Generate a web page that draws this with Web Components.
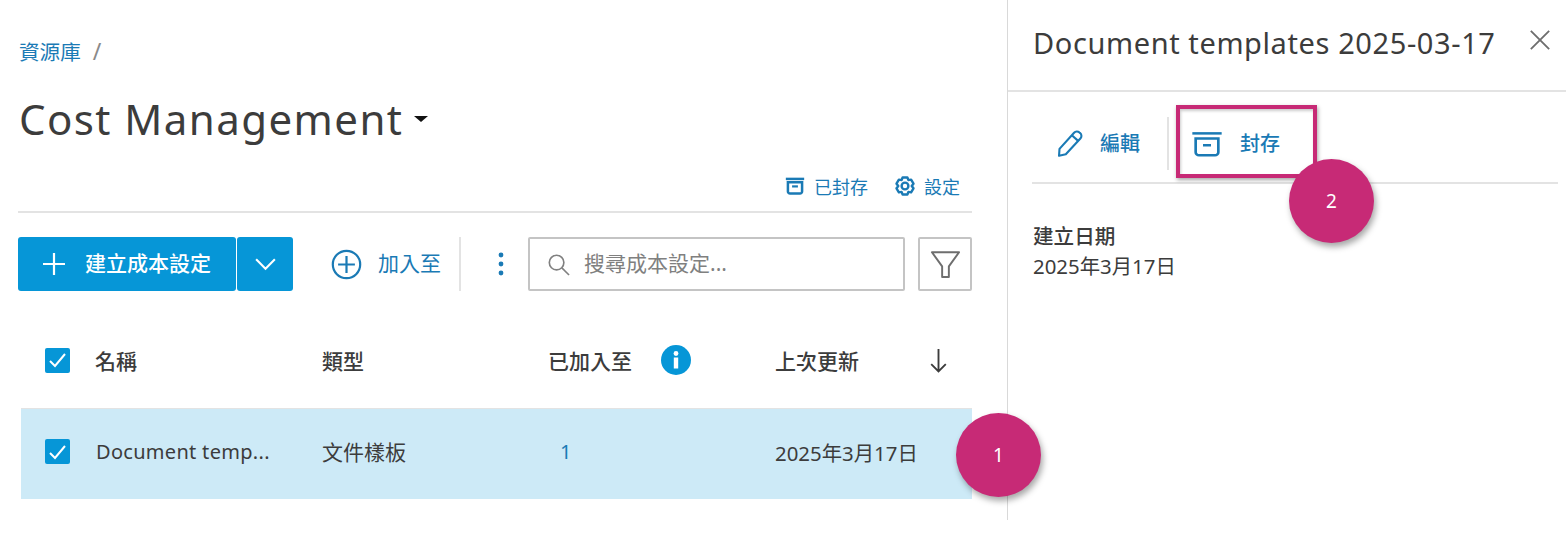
<!DOCTYPE html>
<html lang="zh-Hant">
<head>
<meta charset="utf-8">
<title>Cost Management</title>
<style>
  html, body { margin: 0; background: #fff; }
  body { font-family: "Noto Sans", "Noto Sans CJK TC", sans-serif; color: #3c3c3c; width: 1566px; height: 558px; overflow: hidden; position: relative; }
</style>
</head>
<body>
<app-shell>
  <library-view slot="main"></library-view>
  <detail-panel slot="side"></detail-panel>
</app-shell>
<note-marker n="1" style="left:956px;top:413px"></note-marker>
<note-frame style="left:1176px;top:105px"></note-frame>
<note-marker n="2" style="left:1289px;top:159px"></note-marker>

<script>
const BLUE = '#0696d7';
const LINK = '#1a7ab5';
const FONT = '"Noto Sans", "Noto Sans CJK TC", sans-serif';

const ICONS = {
  plus: '<path d="M12 1v22M1 12h22" fill="none" stroke="currentColor" stroke-width="2.2"/>',
  chevron: '<path d="M3 7l9 9 9-9" fill="none" stroke="currentColor" stroke-width="2"/>',
  addCircle: '<circle cx="12" cy="12" r="10.6" fill="none" stroke="currentColor" stroke-width="1.7"/><path d="M12 5.5v13M5.5 12h13" fill="none" stroke="currentColor" stroke-width="1.7"/>',
  archive: '<path d="M1 3.5h22" fill="none" stroke="currentColor" stroke-width="2"/><path d="M3.5 7.5v11a2.5 2.5 0 0 0 2.5 2.5h12a2.5 2.5 0 0 0 2.5-2.5v-11z" fill="none" stroke="currentColor" stroke-width="2"/><path d="M9 13h6" fill="none" stroke="currentColor" stroke-width="2"/>',
  archiveSmall: '<path d="M1 3.5h22" fill="none" stroke="currentColor" stroke-width="3"/><path d="M3.5 7.5v11a2.5 2.5 0 0 0 2.5 2.5h12a2.5 2.5 0 0 0 2.5-2.5v-11z" fill="none" stroke="currentColor" stroke-width="3"/><path d="M8.5 12.5h7" fill="none" stroke="currentColor" stroke-width="2.6"/>',
  gear: '<g transform="translate(0 1)"><path d="M9.6 2.5h4.8l1 2.6 2.7-.5 2.4 4.1-1.8 2.3 1.8 2.3-2.4 4.1-2.7-.5-1 2.6H9.6l-1-2.6-2.7.5-2.4-4.1 1.8-2.3-1.8-2.3 2.4-4.1 2.7.5z" fill="none" stroke="currentColor" stroke-width="2.4" stroke-linejoin="round"/><circle cx="12" cy="11" r="3.4" fill="none" stroke="currentColor" stroke-width="2.4"/></g>',
  search: '<circle cx="10" cy="10" r="7.6" fill="none" stroke="currentColor" stroke-width="1.7"/><path d="M15.5 15.5L23 23" fill="none" stroke="currentColor" stroke-width="1.7"/>',
  filter: '<path d="M1.5 2.5h21L14.6 13.5v8.2h-5.2v-8.2z" fill="none" stroke="currentColor" stroke-width="1.5" stroke-linejoin="round"/>',
  arrowDown: '<path d="M12 1v21.5M5 15.5l7 7 7-7" fill="none" stroke="currentColor" stroke-width="1.8"/>',
  close: '<path d="M2 2l20 20M22 2L2 22" fill="none" stroke="currentColor" stroke-width="2"/>',
  pencil: '<path d="M3 17L15.5 3.2a3.2 3.2 0 0 1 4.6-.2l.6.5a3.2 3.2 0 0 1 .2 4.6L8.4 21.6 2.6 23z" fill="none" stroke="currentColor" stroke-width="1.8" stroke-linejoin="round"/><path d="M13.6 5.4l5.6 5" fill="none" stroke="currentColor" stroke-width="1.8"/>'
};

class UiIcon extends HTMLElement {
  connectedCallback () {
    const size = this.getAttribute('size') || 24;
    const h = this.getAttribute('h') || size;
    this.attachShadow({ mode: 'open' }).innerHTML = `
      <style>:host { display: inline-flex; flex: none; line-height: 0; } svg { display: block; }</style>
      <svg width="${ size }" height="${ h }" viewBox="0 0 24 24" preserveAspectRatio="none">${ ICONS[this.getAttribute('name')] }</svg>`;
  }
}

class CheckBox extends HTMLElement {
  constructor () {
    super();
    this.attachShadow({ mode: 'open' }).innerHTML = `
      <style>
        :host { display: inline-flex; flex: none; width: 25px; height: 25px; background: ${ BLUE }; border-radius: 2px; align-items: center; justify-content: center; }
      </style>
      <svg width="19" height="16" viewBox="0 0 19 16"><path d="M2 9l5 5L17 2" fill="none" stroke="#fff" stroke-width="2"/></svg>`;
  }
}

class AppShell extends HTMLElement {
  constructor () {
    super();
    this.attachShadow({ mode: 'open' }).innerHTML = `
      <style>
        :host { display: grid; grid-template-columns: 1008px 558px; height: 520px; }
        .main { border-right: 1px solid #d9d9d9; }
      </style>
      <div class="main"><slot name="main"></slot></div>
      <div><slot name="side"></slot></div>`;
  }
}

class LibraryView extends HTMLElement {
  constructor () {
    super();
    this.attachShadow({ mode: 'open' }).innerHTML = `
      <style>
        :host { display: block; padding: 0 35px 0 18px; font-family: ${ FONT }; }
        .crumb { display: flex; align-items: center; height: 26px; padding-top: 38px; padding-left: 1px; font-size: 20.6px; color: ${ LINK }; gap: 12px; }
        .crumb i { font-style: normal; color: #8a8a8a; font-size: 23px; }
        .title { display: flex; align-items: center; height: 62px; margin-top: 23px; margin-bottom: 2px; font-size: 42px; letter-spacing: 1.43px; color: #3c3c3c; gap: 11px; padding-left: 1px; }
        .caret { width: 0; height: 0; border: 7px solid transparent; border-top: 6px solid #111; border-bottom: 0; margin-top: 2px; }
        .links { display: flex; justify-content: flex-end; align-items: center; gap: 26px; height: 50px; margin-top: 12px; padding-right: 12px; border-bottom: 2px solid #e3e3e3; font-size: 18px; color: ${ LINK }; }
        .links span { display: flex; align-items: center; gap: 9px; }
        .links .gear { margin: 0 -2px 0 -1px; }
      </style>
      <div class="crumb">資源庫 <i>/</i></div>
      <div class="title">Cost Management<span class="caret"></span></div>
      <div class="links">
        <span><ui-icon name="archiveSmall" size="20"></ui-icon>已封存</span>
        <span><ui-icon class="gear" name="gear" size="24"></ui-icon>設定</span>
      </div>
      <action-bar></action-bar>
      <cost-table></cost-table>`;
  }
}

class ActionBar extends HTMLElement {
  constructor () {
    super();
    this.attachShadow({ mode: 'open' }).innerHTML = `
      <style>
        :host { display: flex; align-items: stretch; height: 54px; margin-top: 24px; font-family: ${ FONT }; }
        .btn { background: ${ BLUE }; color: #fff; display: flex; align-items: center; font-size: 21px; font-weight: 500; }
        .create { width: 218px; border-radius: 3px; box-sizing: border-box; padding-left: 24px; gap: 19px; }
        .create span, .add span, .search span { position: relative; top: -2px; }
        .more { width: 56px; margin-left: 1px; border-radius: 3px; justify-content: center; }
        .add { display: flex; align-items: center; gap: 16px; margin-left: 38px; font-size: 21px; color: ${ LINK }; width: 130px; box-sizing: border-box; border-right: 2px solid #e3e3e3; }
        .dots { width: 67px; box-sizing: border-box; padding-left: 12px; display: flex; align-items: center; justify-content: center; }
        .dots svg { display: block; }
        .search { width: 377px; box-sizing: border-box; border: 2px solid #c4c4c4; border-radius: 2px; display: flex; align-items: center; padding-left: 17px; gap: 14px; color: #808080; font-size: 21px; }
        .filter { width: 54px; margin-left: 13px; box-sizing: border-box; border: 2px solid #c4c4c4; border-radius: 2px; display: flex; align-items: center; justify-content: center; color: #6e6e6e; }
      </style>
      <div class="btn create"><ui-icon name="plus" size="24"></ui-icon><span>建立成本設定</span></div>
      <div class="btn more"><ui-icon name="chevron" size="25"></ui-icon></div>
      <div class="add"><ui-icon name="addCircle" size="31"></ui-icon><span>加入至</span></div>
      <div class="dots"><svg width="6" height="24" viewBox="0 0 6 24" fill="${ LINK }"><circle cx="3" cy="3" r="2.4"/><circle cx="3" cy="12" r="2.4"/><circle cx="3" cy="21" r="2.4"/></svg></div>
      <div class="search"><ui-icon name="search" size="23"></ui-icon><span>搜尋成本設定...</span></div>
      <div class="filter"><ui-icon name="filter" size="31"></ui-icon></div>`;
  }
}

class CostTable extends HTMLElement {
  constructor () {
    super();
    this.attachShadow({ mode: 'open' }).innerHTML = `
      <style>
        :host { display: block; font-family: ${ FONT }; font-size: 21px; color: #3c3c3c; }
        .row { display: grid; align-items: center; box-sizing: border-box; }
        .head { height: 117px; padding-top: 21px; font-weight: 500; grid-template-columns: 27px 50px 227px 227px 226px 1fr; }
        .body { height: 91px; padding-bottom: 5px; background: #cdeaf7; margin-left: 3px; grid-template-columns: 24px 51px 226px 227px 226px 1fr; border-top: 1px solid #e3e3e3; }
        .with { display: flex; align-items: center; gap: 28px; margin-left: -1px; }
        .info { width: 30px; height: 30px; margin-left: 1px; }
        .sort { display: flex; align-items: center; justify-content: space-between; padding-right: 21px; }
        .count { color: ${ LINK }; padding-left: 11px; font-size: 20px; }
        .name { font-size: 20px; letter-spacing: .3px; }
        .type { position: relative; top: -1px; }
        .date { font-size: 20.4px; }
      </style>
      <div class="row head">
        <span></span><check-box></check-box>
        <span>名稱</span>
        <span>類型</span>
        <span class="with">已加入至<svg class="info" viewBox="0 0 30 30"><circle cx="15" cy="15" r="15" fill="${ BLUE }"/><circle cx="15" cy="8.5" r="2.4" fill="#fff"/><rect x="12.8" y="12.5" width="4.4" height="11" fill="#fff"/></svg></span>
        <span class="sort">上次更新<ui-icon name="arrowDown" size="25"></ui-icon></span>
      </div>
      <div class="row body">
        <span></span><check-box></check-box>
        <span class="name">Document temp...</span>
        <span class="type">文件樣板</span>
        <span class="count">1</span>
        <span class="date">2025年3月17日</span>
      </div>`;
  }
}

class DetailPanel extends HTMLElement {
  constructor () {
    super();
    this.attachShadow({ mode: 'open' }).innerHTML = `
      <style>
        :host { display: block; font-family: ${ FONT }; color: #3c3c3c; }
        .top { display: flex; justify-content: space-between; height: 92px; box-sizing: border-box; padding: 22px 15px 0 25px; border-bottom: 2px solid #e3e3e3; }
        .top h2 { margin: 0; font-size: 29px; font-weight: 400; letter-spacing: .6px; line-height: 42px; }
        .top ui-icon { color: #6e6e6e; margin-top: 7px; }
        .tools { display: flex; align-items: center; height: 92px; padding-top: 12px; margin: 0 8px 0 24px; border-bottom: 2px solid #e3e3e3; box-sizing: border-box; color: ${ LINK }; font-size: 20px; font-weight: 500; }
        .tool { display: flex; align-items: center; }
        .tool span { position: relative; top: -1px; }
        .edit { padding-left: 24px; gap: 16px; width: 137px; height: 53px; border-right: 2px solid #e3e3e3; box-sizing: border-box; }
        .arch { padding-left: 22px; gap: 17px; }
        .arch ui-icon { margin-top: 2px; }
        .meta { padding: 37px 0 0 25px; font-size: 20.4px; line-height: 30px; }
        .meta b { display: block; font-weight: 500; font-size: 20.6px; }
      </style>
      <div class="top">
        <h2>Document templates 2025-03-17</h2>
        <ui-icon name="close" size="22"></ui-icon>
      </div>
      <div class="tools">
        <div class="tool edit"><ui-icon name="pencil" size="28"></ui-icon><span>編輯</span></div>
        <div class="tool arch"><ui-icon name="archive" size="32" h="30"></ui-icon><span>封存</span></div>
      </div>
      <div class="meta"><b>建立日期</b>2025年3月17日</div>`;
  }
}

// annotations laid over the screenshot
class NoteMarker extends HTMLElement {
  connectedCallback () {
    this.attachShadow({ mode: 'open' }).innerHTML = `
      <style>
        :host { position: absolute; width: 85px; height: 84px; border-radius: 50%; background: #c72a76; color: #fff; display: flex; align-items: center; justify-content: center; font: 400 19px "Noto Sans", sans-serif; box-shadow: 2px 4px 6px rgba(0,0,0,.35); }
      </style>
      <slot>${ this.getAttribute('n') }</slot>`;
  }
}

class NoteFrame extends HTMLElement {
  constructor () {
    super();
    this.attachShadow({ mode: 'open' }).innerHTML = `
      <style>
        :host { position: absolute; width: 141px; height: 73px; box-sizing: border-box; border: 4px solid #c72a76; box-shadow: 1px 2px 4px rgba(0,0,0,.35), inset 1px 2px 3px rgba(0,0,0,.2); }
      </style>`;
  }
}

customElements.define('ui-icon', UiIcon);
customElements.define('check-box', CheckBox);
customElements.define('app-shell', AppShell);
customElements.define('library-view', LibraryView);
customElements.define('action-bar', ActionBar);
customElements.define('cost-table', CostTable);
customElements.define('detail-panel', DetailPanel);
customElements.define('note-marker', NoteMarker);
customElements.define('note-frame', NoteFrame);
</script>
</body>
</html>
